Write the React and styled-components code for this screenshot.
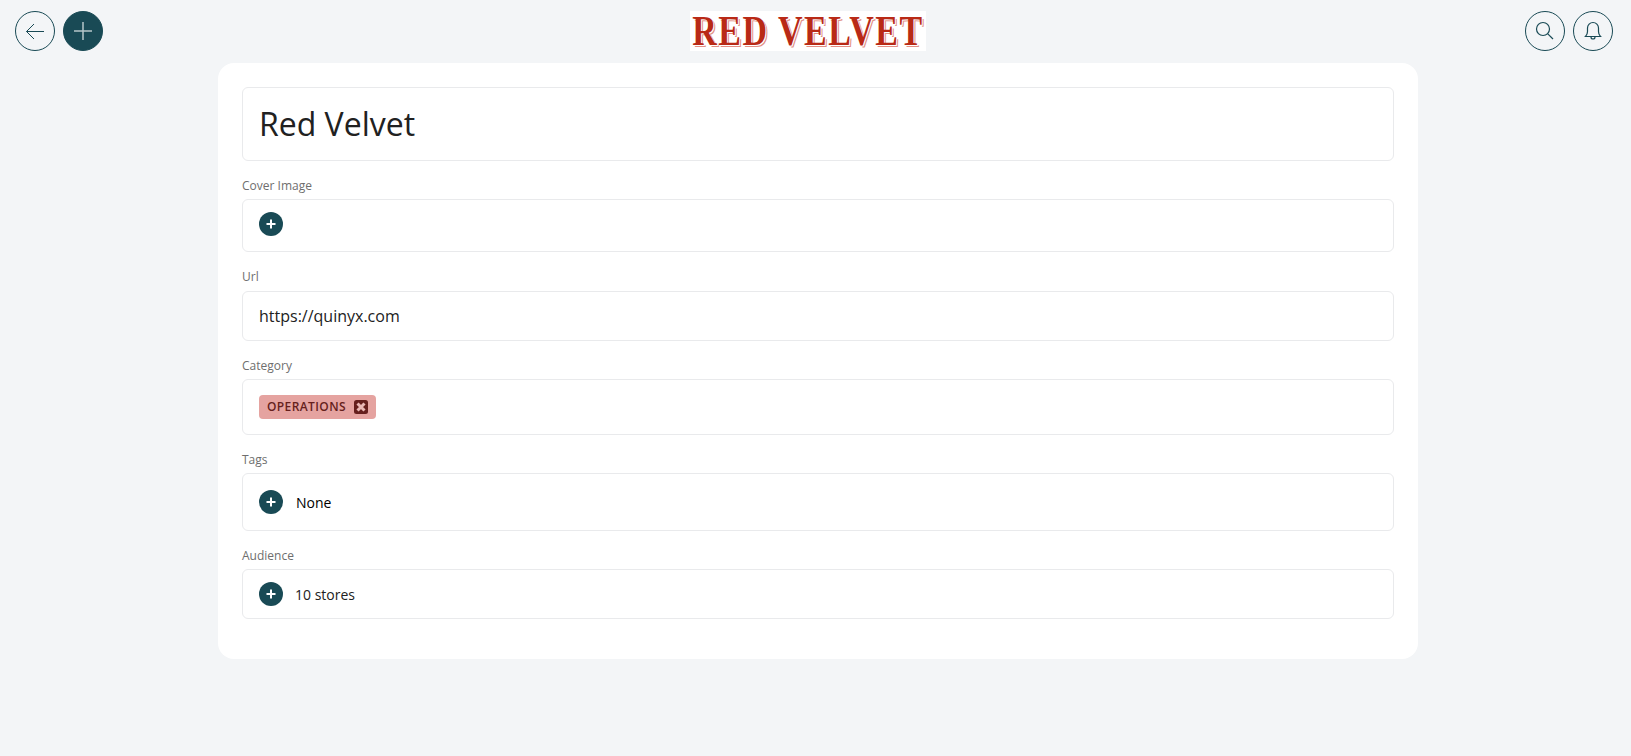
import React from "react";
import styled, { createGlobalStyle } from "styled-components";

const GlobalStyle = createGlobalStyle`
  * {
    box-sizing: border-box;
  }
  html, body {
    margin: 0;
    padding: 0;
    background-color: #f3f5f7;
    font-family: "Open Sans", "Liberation Sans", sans-serif;
  }
`;

const Page = styled.div`
  min-height: 756px;
  display: flex;
  flex-direction: column;
`;

const Header = styled.header`
  height: 63px;
  padding: 11px 18px 0 15px;
  display: flex;
  justify-content: space-between;
  align-items: flex-start;
`;

const ButtonGroup = styled.div`
  display: flex;
  gap: 8px;
`;

const RoundButton = styled.button`
  width: 40px;
  height: 40px;
  padding: 0;
  border-radius: 50%;
  border: 1px solid #194a55;
  background-color: ${(p) => (p.$filled ? "#194a55" : "transparent")};
  display: flex;
  align-items: center;
  justify-content: center;
`;

const Logo = styled.div`
  width: 236px;
  height: 40px;
  margin-right: 12px;
  display: flex;
  align-items: center;
  justify-content: center;
  background-color: #fff;
  color: #b92a16;
  font-family: "Liberation Serif", serif;
  font-weight: 700;
  font-size: 34px;
  line-height: 36px;
  letter-spacing: 1.5px;
  white-space: nowrap;
  text-shadow: 1px 1px 0 #fff, 2px 2px 0 #e28f84;
`;

const LogoText = styled.span`
  display: block;
  transform: scaleY(1.25);
`;

const Card = styled.main`
  width: 1200px;
  margin-left: 218px;
  height: 596px;
  padding: 24px;
  background-color: #fff;
  border-radius: 16px;
`;

const Box = styled.div`
  height: ${(p) => p.$height}px;
  padding: 0 16px ${(p) => p.$lift || 0}px;
  border: 1px solid #e9eaec;
  border-radius: 6px;
  display: flex;
  align-items: center;
  gap: ${(p) => p.$gap || 12}px;
`;

const Field = styled.section`
  margin-top: 14px;
`;

const Label = styled.div`
  height: ${(p) => p.$height || 24}px;
  padding-top: 2px;
  font-size: 12px;
  line-height: 18px;
  color: #6e6e6e;
`;

const Title = styled.h1`
  margin: 0;
  font-size: 32px;
  font-weight: 400;
  color: #212121;
`;

const Value = styled.span`
  font-size: ${(p) => p.$size || 14}px;
  color: ${(p) => p.$color || "#212121"};
`;

const AddDot = styled.span`
  width: 24px;
  height: 24px;
  border-radius: 50%;
  background-color: #194a55;
  display: flex;
  align-items: center;
  justify-content: center;
`;

const Chip = styled.span`
  height: 24px;
  padding: 0 8px 1px;
  border-radius: 4px;
  background-color: #e5a3a0;
  color: #661f1d;
  font-size: 12px;
  font-weight: 600;
  letter-spacing: 0.4px;
  display: flex;
  align-items: center;
  gap: 8px;
`;

const PlusSmall = () => (
  <svg width="10" height="10" viewBox="0 0 10 10" fill="none" stroke="#fff" strokeWidth="2">
    <path d="M5 0.5v9M0.5 5h9" />
  </svg>
);

const ChipClose = () => (
  <svg width="14" height="14" viewBox="0 0 14 14">
    <rect width="14" height="14" rx="2.5" fill="#661f1d" />
    <path d="M3.5 3.5l7 7M10.5 3.5l-7 7" stroke="#eab8b5" strokeWidth="3" />
  </svg>
);

const App = () => (
  <Page>
    <GlobalStyle />
    <Header>
      <ButtonGroup>
        <RoundButton aria-label="back">
          <svg width="20" height="19" viewBox="0 0 20 19" fill="none" stroke="#194a55" strokeWidth="1">
            <path d="M19 9.5H1.5M9 2L1.5 9.5L9 17" />
          </svg>
        </RoundButton>
        <RoundButton $filled aria-label="add">
          <svg width="20" height="20" viewBox="0 0 20 20" fill="none" stroke="#b5c6c9" strokeWidth="1.5">
            <path d="M10 1v18M1 10h18" />
          </svg>
        </RoundButton>
      </ButtonGroup>
      <Logo>
        <LogoText>RED VELVET</LogoText>
      </Logo>
      <ButtonGroup>
        <RoundButton aria-label="search">
          <svg width="20" height="20" viewBox="0 0 20 20" fill="none" stroke="#194a55" strokeWidth="1.2">
            <circle cx="8" cy="8" r="6.5" />
            <path d="M12.8 12.8L18 18" />
          </svg>
        </RoundButton>
        <RoundButton aria-label="notifications">
          <svg width="18" height="20" viewBox="0 0 18 20" fill="none" stroke="#194a55" strokeWidth="1.2">
            <path d="M1.5 15.5c1.5-1.5 2-3 2-5V7a5.5 5.5 0 0 1 11 0v3.5c0 2 .5 3.5 2 5z" />
            <path d="M7 16a2 2 0 0 0 4 0" />
          </svg>
        </RoundButton>
      </ButtonGroup>
    </Header>
    <Card>
      <Box $height={74} $lift={2}>
        <Title>Red Velvet</Title>
      </Box>
      <Field>
        <Label>Cover Image</Label>
        <Box $height={53} $lift={4}>
          <AddDot><PlusSmall /></AddDot>
        </Box>
      </Field>
      <Field>
        <Label $height={25}>Url</Label>
        <Box $height={50}>
          <Value $size={16}>https://quinyx.com</Value>
        </Box>
      </Field>
      <Field>
        <Label>Category</Label>
        <Box $height={56}>
          <Chip>
            OPERATIONS
            <ChipClose />
          </Chip>
        </Box>
      </Field>
      <Field>
        <Label>Tags</Label>
        <Box $height={58} $gap={13}>
          <AddDot><PlusSmall /></AddDot>
          <Value $color="#000">None</Value>
        </Box>
      </Field>
      <Field>
        <Label>Audience</Label>
        <Box $height={50}>
          <AddDot><PlusSmall /></AddDot>
          <Value>10 stores</Value>
        </Box>
      </Field>
    </Card>
  </Page>
);

export default App;
